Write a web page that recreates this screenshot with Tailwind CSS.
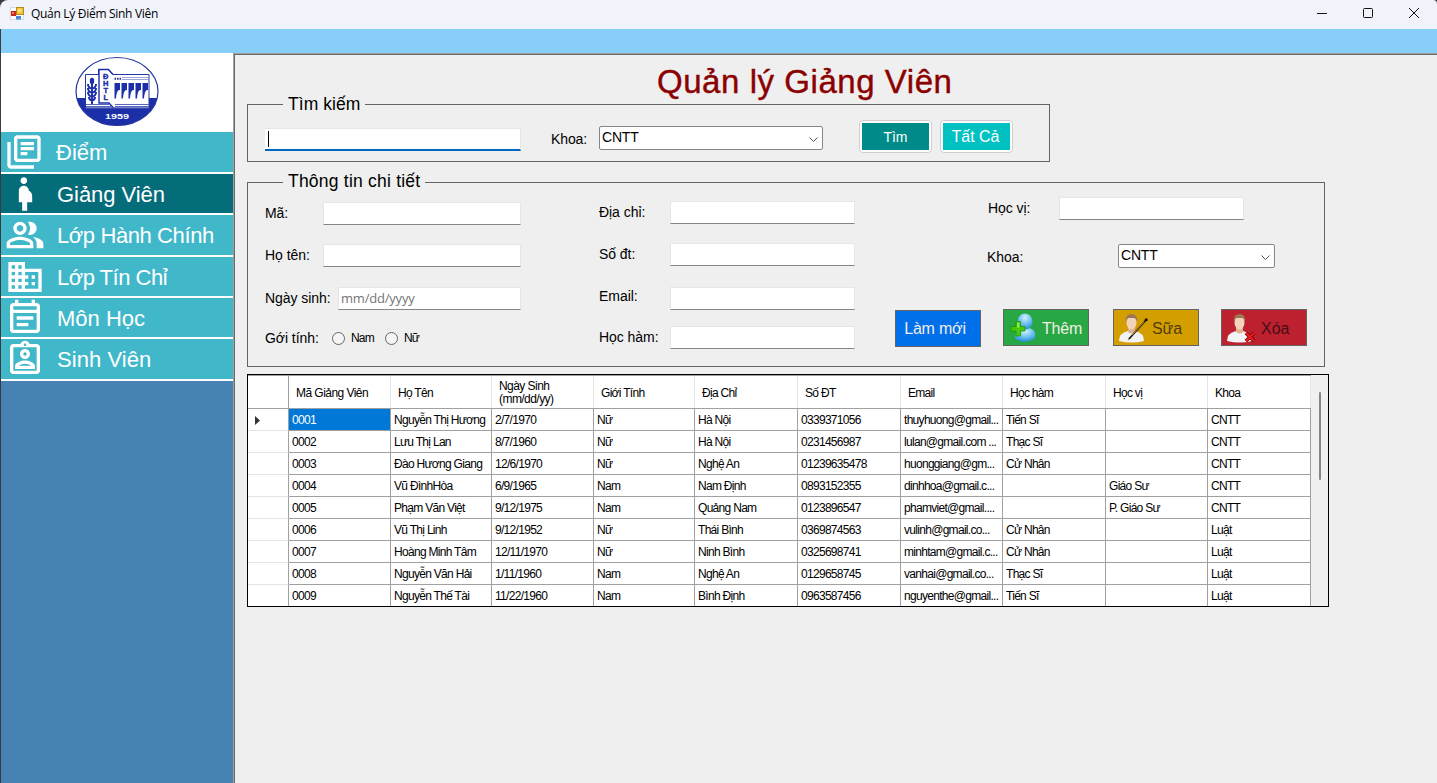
<!DOCTYPE html>
<html lang="vi">
<head>
<meta charset="utf-8">
<title>Quản Lý Điểm Sinh Viên</title>
<script src="https://cdn.jsdelivr.net/npm/@tailwindcss/browser@4"></script>
</head>
<body class="w-[1437px] h-[783px] overflow-hidden bg-[#3c3c3c] font-['Liberation_Sans',Arial,sans-serif] text-black flex flex-col">

<!-- Title bar -->
<header class="h-[29px] shrink-0 bg-[#f1f3fb] rounded-tl-lg rounded-tr-sm flex items-center pl-2.5">
  <svg class="w-3.5 h-[13px] mb-0.5" viewBox="0 0 14 13">
    <rect x=".5" y=".5" width="13" height="12" fill="#fff" stroke="#d8dbe4"/>
    <rect x="1" y="4" width="5" height="5" fill="#c8281c"/><rect x="2" y="5" width="2" height="2" fill="#ef7d60"/>
    <rect x="6.500" y=".5" width="7" height="7" fill="#f8c43a" stroke="#b58a1b"/><rect x="8" y="2" width="3" height="3" fill="#fde58e"/>
    <rect x="6" y="9" width="5" height="3.500" fill="#4f87dd"/>
  </svg>
  <span class="ml-[7px] mb-0.5 font-['Open_Sans','Noto_Sans',sans-serif] text-[12px] leading-none tracking-[-0.300px]">Quản Lý Điểm Sinh Viên</span>
  <div class="ml-auto mr-[17px] mb-1 flex gap-[34px]">
    <svg class="w-3 h-3" viewBox="0 0 12 12"><path d="M1 6.500h10" stroke="#111" fill="none"/></svg>
    <svg class="w-3 h-3" viewBox="0 0 12 12"><rect x="1.500" y="1.500" width="9" height="9" rx="1" stroke="#111" fill="none"/></svg>
    <svg class="w-3 h-3" viewBox="0 0 12 12"><path d="M1 1l10 10M11 1L1 11" stroke="#111" fill="none"/></svg>
  </div>
</header>
<div class="h-6 shrink-0 ml-px bg-[#87cefa]"></div>

<div class="flex grow min-h-0 ml-px">
  <!-- Sidebar -->
  <aside class="w-[232px] shrink-0 bg-[#4682b4]">
    <div class="h-[79px] bg-white pl-[74px] pt-[3px]">
      <svg class="w-[84px] h-[71px]" viewBox="0 0 84 71">
        <clipPath id="oval"><ellipse cx="42" cy="35.500" rx="41" ry="34"/></clipPath>
        <ellipse cx="42" cy="35.500" rx="41" ry="34" fill="#fff"/>
        <rect x="0" y="42" width="84" height="29" fill="#1a2fa8" clip-path="url(#oval)"/>
        <path d="M10.500 18.500h13v-5h10l4.500 5h36v33.500H10.500z" fill="#fff" stroke="#24389f"/>
        <path d="M24 18.500v-5h9.500l4.500 5M24 18v29h10l4.500 5" fill="none" stroke="#1a2fa8" stroke-width="1.400"/>
        <path d="M11 48.500h23M40 48.500h34M11 50.500h25M40 50.500h34M11 52h63" stroke="#5867bb"/>
        <path d="M47 21.500h27M47 23.500h27" stroke="#8791cf" stroke-width=".8"/>
        <path d="M39.500 22.700h7" stroke="#24389f" stroke-width="2" stroke-dasharray="1.600 .9"/>
        <path d="M39.500 27h5.500v7q-3.500-1-4 8.500h-1.500zM46.500 27h5.500v7q-3.500-1-4 8.500h-1.500zM53.500 27h5.500v7q-3.500-1-4 8.500h-1.500zM60.500 27h5.500v7q-3.500-1-4 8.500h-1.500zM67.500 27h5.500v7q-3.500-1-4 8.500h-1.500z" fill="#1a2fa8"/>
        <path d="M17 22v26M13 28q0 4 4 4.500q4-.5 4-4.500M13 32q0 4 4 4.500q4-.5 4-4.500M13 36q0 4 4 4.500q4-.5 4-4.500M14 41q0 3 3 3.500q3-.5 3-3.500" fill="none" stroke="#1a2fa8" stroke-width="2"/>
        <ellipse cx="17" cy="25" rx="2.200" ry="3.200" fill="#1a2fa8"/>
        <g fill="#1a2fa8" stroke="#1a2fa8" stroke-width=".4" font-family="Liberation Sans" font-weight="700" font-size="7.500">
          <text x="28" y="23">Đ</text><text x="28" y="30">H</text><text x="28.500" y="37">T</text><text x="28.500" y="44">L</text>
        </g>
        <text x="30" y="63" fill="#fff" font-family="Liberation Sans" font-weight="700" font-size="7.500" textLength="24" lengthAdjust="spacingAndGlyphs">1959</text>
        <ellipse cx="42" cy="35.500" rx="41" ry="34" fill="none" stroke="#24389f" stroke-width="1.200"/>
      </svg>
    </div>
    <nav class="text-white text-[22px] leading-none">
      <div class="h-[42px] bg-[#41b8c9] border-b-2 border-white flex items-center pl-[3px]">
        <svg class="size-10 shrink-0" viewBox="0 0 24 24" fill="currentColor"><path d="M4 6H2v14c0 1.100.9 2 2 2h14v-2H4V6zm16-4H8c-1.100 0-2 .9-2 2v12c0 1.100.9 2 2 2h12c1.100 0 2-.9 2-2V4c0-1.100-.9-2-2-2zm0 14H8V4h12v12zM10 9h8v2h-8zm0 3h4v2h-4zm0-6h8v2h-8z"/></svg>
        <span class="ml-3 pt-0.5">Điểm</span>
      </div>
      <div class="h-[41px] bg-[#056d7a] border-b-2 border-white flex items-center pl-1">
        <svg class="size-10 shrink-0" viewBox="0 0 24 24" fill="currentColor"><path d="M9 4c0-1.110.89-2 2-2s2 .89 2 2-.89 2-2 2-2-.89-2-2zm7 9c-.01-1.340-.83-2.510-2-3 0-1.660-1.340-3-3-3s-3 1.340-3 3v7h2v5h3v-5h3v-4z" transform="translate(.3 0)"/></svg>
        <span class="ml-3 pt-0.5 tracking-[-0.050px]">Giảng Viên</span>
      </div>
      <div class="h-[42px] bg-[#41b8c9] border-b-2 border-white flex items-center pl-1">
        <svg class="size-10 shrink-0" viewBox="0 0 24 24" fill="currentColor"><path d="M16.670 13.130C18.040 14.060 19 15.320 19 17v3h4v-3c0-2.180-3.570-3.470-6.330-3.870zM15 12c2.210 0 4-1.790 4-4s-1.790-4-4-4c-.47 0-.91.1-1.330.24C14.500 5.270 15 6.580 15 8s-.5 2.730-1.330 3.760c.42.14.86.24 1.330.24zM9 12c2.210 0 4-1.790 4-4s-1.790-4-4-4-4 1.790-4 4 1.790 4 4 4zm0-6c1.100 0 2 .9 2 2s-.9 2-2 2-2-.9-2-2 .9-2 2-2zm0 7c-2.670 0-8 1.340-8 4v3h16v-3c0-2.660-5.330-4-8-4zm6 5H3v-.99C3.200 16.290 6.300 15 9 15s5.800 1.290 6 2v1z"/></svg>
        <span class="ml-3 pt-0.5 tracking-[-0.400px]">Lớp Hành Chính</span>
      </div>
      <div class="h-[41px] bg-[#41b8c9] border-b-2 border-white flex items-center pl-1">
        <svg class="size-10 shrink-0" viewBox="0 0 24 24" fill="currentColor"><path d="M12 7V3H2v18h20V7H12zM6 19H4v-2h2v2zm0-4H4v-2h2v2zm0-4H4V9h2v2zm0-4H4V5h2v2zm4 12H8v-2h2v2zm0-4H8v-2h2v2zm0-4H8V9h2v2zm0-4H8V5h2v2zm10 12h-8v-2h2v-2h-2v-2h2v-2h-2V9h8v10zm-2-8h-2v2h2v-2zm0 4h-2v2h2v-2z"/></svg>
        <span class="ml-3 pt-0.5 tracking-[-0.500px]">Lớp Tín Chỉ</span>
      </div>
      <div class="h-[41px] bg-[#41b8c9] border-b-2 border-white flex items-center pl-1">
        <svg class="size-10 shrink-0" viewBox="0 0 24 24" fill="currentColor" fill-rule="evenodd"><path d="M19 3h-1V1h-2v2H8V1H6v2H5c-1.110 0-2 .9-2 2v14c0 1.100.89 2 2 2h14c1.100 0 2-.9 2-2V5c0-1.100-.9-2-2-2zM5 5h14v2H5zM5 9h14v10H5zM7 11h10v2H7zM7 15h7v2H7z"/></svg>
        <span class="ml-3 pt-0.5">Môn Học</span>
      </div>
      <div class="h-[42px] bg-[#41b8c9] border-b-2 border-white flex items-center pl-1">
        <svg class="size-10 shrink-0" viewBox="0 0 24 24" fill="currentColor" fill-rule="evenodd"><path d="M19 3h-4.180C14.400 1.840 13.300 1 12 1s-2.400.84-2.820 2H5c-1.100 0-2 .9-2 2v14c0 1.100.9 2 2 2h14c1.100 0 2-.9 2-2V5c0-1.100-.9-2-2-2zm-7-.25c.41 0 .75.34.75.75s-.34.75-.75.75-.75-.34-.75-.75.34-.75.75-.75zM19 19H5V5h14v14zM12 12c1.650 0 3-1.350 3-3s-1.350-3-3-3-3 1.350-3 3 1.350 3 3 3zm0-4c.55 0 1 .45 1 1s-.45 1-1 1-1-.45-1-1 .45-1 1-1zM6 16.470V18h12v-1.530c0-2.500-3.970-3.580-6-3.580s-6 1.070-6 3.580zm2.310-.47c.69-.56 2.380-1.120 3.690-1.120s3.010.56 3.690 1.120H8.310z"/></svg>
        <span class="ml-3 pt-0.5 tracking-[0.050px]">Sinh Viên</span>
      </div>
    </nav>
  </aside>

  <!-- Content -->
  <main class="grow min-w-0 bg-[#a0a0a0] pl-px pt-px">
  <div class="h-full bg-[#efefef] border-l border-t border-[#696969] pl-3">
    <h1 class="h-[41px] ml-[410px] pt-[9px] text-[#8b0000] text-[33px] leading-[36px] tracking-[0.550px] [-webkit-text-stroke:0.4px_#8b0000] whitespace-nowrap">Quản lý Giảng Viên</h1>

    <fieldset class="w-[803px] h-[66px] border border-[#646464] flex">
      <legend class="ml-[35px] px-[5px] h-[17px] leading-[16px] text-[17.500px] tracking-[0.050px]">Tìm kiếm</legend>
      <div class="flex items-start text-[14px] leading-none tracking-[-0.100px]">
        <div class="ml-[17px] mt-[15px] w-64 h-[23px] bg-white border-t border-r border-[#e3e6ea] border-b-2 border-b-[#0067c0] pl-[3px] pt-0.5"><div class="w-px h-4 bg-black"></div></div>
        <span class="w-12 ml-[30px] mt-[19px]">Khoa:</span>
        <div class="w-56 h-6 mt-[13px] bg-white border border-[#868686] rounded-xs flex justify-between pl-0.5 pt-[3px] pr-1">
          <span class="tracking-[-0.200px]">CNTT</span>
          <svg class="w-[9px] h-[5px] mt-[7px]" viewBox="0 0 9 5"><path d="M.5.5l4 4 4-4" fill="none" stroke="#555"/></svg>
        </div>
        <button class="ml-9 mt-[7px] w-[73px] h-[33px] rounded border border-[#cfcfcf] bg-white p-0.5"><span class="w-full h-full bg-[#008b8b] text-white flex items-center justify-center pt-px">Tìm</span></button>
        <button class="ml-2 mt-[7px] w-[73px] h-[33px] rounded border border-[#cfcfcf] bg-white p-0.5"><span class="w-full h-full bg-[#00c1c1] text-white flex items-center justify-center text-base leading-none tracking-normal pr-0.5">Tất Cả</span></button>
      </div>
    </fieldset>

    <fieldset class="mt-3 w-[1078px] h-[193px] border border-[#646464]">
      <legend class="ml-[35px] px-[5px] h-[17px] leading-[14px] text-[17.500px] tracking-[0.220px]">Thông tin chi tiết</legend>
      <div class="flex text-[14px] leading-[16px] tracking-[-0.050px]">
        <div class="ml-[17px] w-64 flex flex-col">
          <div class="mt-[11px] flex justify-between items-center h-[23px]"><span class="pb-0.5">Mã:</span><div class="w-[198px] h-[23px] bg-white border border-[#e6e6e6] border-b-[#868686]"></div></div>
          <div class="mt-[19px] flex justify-between items-center h-[23px]"><span class="pb-0.5">Họ tên:</span><div class="w-[198px] h-[23px] bg-white border border-[#e6e6e6] border-b-[#868686]"></div></div>
          <div class="mt-5 flex justify-between items-center h-[23px]"><span class="pb-0.5">Ngày sinh:</span><div class="w-[183px] h-[23px] bg-white border border-[#e6e6e6] border-b-[#868686] pl-0.5 leading-[21px] font-['Open_Sans','Noto_Sans',sans-serif] text-[13px] tracking-[-0.200px] text-[#757575]">mm/dd/yyyy</div></div>
          <div class="mt-5 flex items-center"><span class="w-[67px]">Gới tính:</span>
            <span class="size-[13px] rounded-full border border-[#666] bg-[#f5f5f5]"></span><span class="ml-1.5 w-[34px] text-[12px] tracking-[-0.800px]">Nam</span>
            <span class="size-[13px] rounded-full border border-[#666] bg-[#f5f5f5]"></span><span class="ml-1.5 text-[12px] tracking-[-0.800px]">Nữ</span></div>
        </div>
        <div class="ml-[78px] w-64 flex flex-col">
          <div class="mt-[10px] flex justify-between items-center h-[23px]"><span class="pb-0.5">Địa chỉ:</span><div class="w-[185px] h-[23px] bg-white border border-[#e6e6e6] border-b-[#868686]"></div></div>
          <div class="mt-[19px] flex justify-between items-center h-[23px]"><span class="pb-0.5">Số đt:</span><div class="w-[185px] h-[23px] bg-white border border-[#e6e6e6] border-b-[#868686]"></div></div>
          <div class="mt-[21px] flex justify-between h-[23px]"><span class="pt-px">Email:</span><div class="w-[185px] h-[23px] bg-white border border-[#e6e6e6] border-b-[#868686]"></div></div>
          <div class="mt-4 flex justify-between items-center h-[23px]"><span class="pb-px">Học hàm:</span><div class="w-[185px] h-[23px] bg-white border border-[#e6e6e6] border-b-[#868686]"></div></div>
        </div>
        <div class="ml-10 w-[412px] flex flex-col">
          <div class="mt-[6px] ml-[93px] flex h-[23px] items-center"><span class="w-[71px] pb-0.5">Học vị:</span><div class="w-[185px] h-[23px] bg-white border border-[#e6e6e6] border-b-[#868686]"></div></div>
          <div class="mt-6 ml-[92px] flex h-6 items-center"><span class="w-[131px] pt-0.5">Khoa:</span>
            <div class="w-[157px] h-6 bg-white border border-[#868686] rounded-xs flex justify-between pl-0.5 pt-0.5 pr-1"><span class="tracking-[-0.200px]">CNTT</span><svg class="w-[9px] h-[5px] mt-2" viewBox="0 0 9 5"><path d="M.5.5l4 4 4-4" fill="none" stroke="#555"/></svg></div>
          </div>
          <div class="mt-[41px] flex text-base leading-none tracking-normal">
            <button class="mt-px w-[86px] h-[37px] border border-[#646464] bg-[#0070ea] text-[#f3ecec] pr-1.5 pt-px tracking-[-0.200px]">Làm mới</button>
            <button class="ml-[22px] w-[86px] h-[37px] border border-[#646464] bg-[#28a745] text-[#f0f0e4] flex items-center pl-1.5">
              <svg class="w-[26px] h-[30px] shrink-0" viewBox="0 0 26 30">
                <defs><radialGradient id="blue" cx=".5" cy=".25" r=".8"><stop offset="0" stop-color="#d3f0ff"/><stop offset=".6" stop-color="#5db9ef"/><stop offset="1" stop-color="#2387cf"/></radialGradient></defs>
                <path d="M5 25c0-7 5-10 12-10s9 5 8 9c-2 6-18 6-20 1z" fill="url(#blue)"/>
                <ellipse cx="15" cy="8.500" rx="7.500" ry="8" fill="url(#blue)"/>
                <path d="M6 8.500h4.500v5H15v4.500h-4.500v5H6v-5H1v-4.500h5z" fill="#45c80e" stroke="#259400" stroke-width=".8"/>
                <path d="M7 9.500h2.500v5H7z" fill="#8be84d"/>
              </svg><span class="ml-1.5 pt-0.5 tracking-[-0.200px]">Thêm</span>
            </button>
            <button class="ml-6 w-[86px] h-[37px] border border-[#646464] bg-[#d39e00] text-[#513c0c] flex items-center pl-[5px]">
              <svg class="w-[29px] h-[30px] shrink-0" viewBox="0 0 29 30">
                <path d="M0 28q0-8 9-10h7q9 2 9 10-12 3-25 0z" fill="#f3f3f6"/><path d="M9 15h7v4q-3 3-7 0z" fill="#ddb391"/>
                <ellipse cx="12.500" cy="9.500" rx="5" ry="7" fill="#f2d4bb"/><path d="M7 9q-1-8 5.500-8t5.500 8q-1-4-3-4H10q-2 0-3 4z" fill="#9d7654"/>
                <path d="M9.500 26.500L27 7" stroke="#171717" stroke-width="1.800"/><path d="M13 22.200L25 8.800" stroke="#e8bb4c" stroke-width=".7"/><path d="M8.500 28l.7-2.500 1.800 1z" fill="#e8bb4c"/><circle cx="27.200" cy="6.800" r="1.500" fill="#111"/>
              </svg><span class="ml-1 pt-0.5 tracking-[-0.100px]">Sữa</span>
            </button>
            <button class="ml-[22px] w-[86px] h-[37px] border border-[#646464] bg-[#bd2130] text-[#470c16] flex items-center pl-[5px]">
              <svg class="w-[29px] h-[30px] shrink-0" viewBox="0 0 29 30">
                <path d="M0 28q0-8 9-10h7q9 2 9 10-12 3-25 0z" fill="#f3f3f6"/><path d="M9 15h7v4q-3 3-7 0z" fill="#ddb391"/>
                <ellipse cx="12.500" cy="9.500" rx="5" ry="7" fill="#f2d4bb"/><path d="M7 9q-1-8 5.500-8t5.500 8q-1-4-3-4H10q-2 0-3 4z" fill="#9d7654"/>
                <path d="M19 20l8 8M27 20l-8 8" stroke="#6e0000" stroke-width="3.600"/><path d="M19 20l8 8M27 20l-8 8" stroke="#ea1c1c" stroke-width="2.200"/>
              </svg><span class="ml-[5px] pt-0.5">Xóa</span>
            </button>
          </div>
        </div>
      </div>
    </fieldset>

    <!-- Lecturer grid -->
    <div class="mt-[7px] w-[1082px] h-[233px] border border-black flex overflow-hidden text-[12px] leading-[13px] tracking-[-0.700px]">
      <div class="w-[1063px] shrink-0 bg-white border-t border-[#a0a0a0]">
        <div class="grid grid-cols-[41px_102px_101px_102px_101px_103px_103px_102px_103px_102px_103px] h-[33px] border-b border-[#a0a0a0] *:border-r *:border-[#e5e5e5] *:first:border-[#a0a0a0] *:flex *:items-center *:pl-[7px] *:pt-0.5">
          <div></div><div class="tracking-[-0.550px]">Mã Giảng Viên</div><div>Họ Tên</div><div class="tracking-[-0.550px]">Ngày Sinh<br>(mm/dd/yy)</div><div>Giới Tính</div><div>Địa Chỉ</div><div>Số ĐT</div><div>Email</div><div>Học hàm</div><div>Học vị</div><div>Khoa</div>
        </div>
        <div id="rows"></div>
      </div>
      <div class="grow bg-[#f0f0f0] pl-2 pt-[17px]"><div class="w-0.5 h-[88px] rounded-full bg-[#858585]"></div></div>
    </div>
  </div>
  </main>
</div>

<script>
const data = [
  ["0001","Nguyễn Thị Hương","2/7/1970","Nữ","Hà Nội","0339371056","thuyhuong@gmail...","Tiến Sĩ","","CNTT"],
  ["0002","Lưu Thị Lan","8/7/1960","Nữ","Hà Nội","0231456987","lulan@gmail.com ...","Thạc Sĩ","","CNTT"],
  ["0003","Đào Hương Giang","12/6/1970","Nữ","Nghệ An","01239635478","huonggiang@gm...","Cử Nhân","","CNTT"],
  ["0004","Vũ ĐìnhHòa","6/9/1965","Nam","Nam Định","0893152355","dinhhoa@gmail.c...","","Giáo Sư","CNTT"],
  ["0005","Phạm Văn Việt","9/12/1975","Nam","Quảng Nam","0123896547","phamviet@gmail....","","P. Giáo Sư","CNTT"],
  ["0006","Vũ Thị Linh","9/12/1952","Nữ","Thái Bình","0369874563","vulinh@gmail.co...","Cử Nhân","","Luật"],
  ["0007","Hoàng Minh Tâm","12/11/1970","Nữ","Ninh Bình","0325698741","minhtam@gmail.c...","Cử Nhân","","Luật"],
  ["0008","Nguyễn Văn Hải","1/11/1960","Nam","Nghệ An","0129658745","vanhai@gmail.co...","Thạc Sĩ","","Luật"],
  ["0009","Nguyễn Thế Tài","11/22/1960","Nam","Bình Định","0963587456","nguyenthe@gmail...","Tiến Sĩ","","Luật"]
];
document.getElementById("rows").innerHTML = data.map((r, i) =>
  `<div class="grid grid-cols-[41px_102px_101px_102px_101px_103px_103px_102px_103px_102px_103px] h-[22px] whitespace-nowrap">
    <div class="border-r border-r-[#a0a0a0] border-b border-b-[#e5e5e5] flex items-center pl-[7px] pt-px">${i ? "" : '<svg class="w-[5px] h-[9px]" viewBox="0 0 5 9"><path d="M0 0l5 4.500L0 9z" fill="#333"/></svg>'}</div>` +
  r.map((c, j) => `<div class="border-r border-b border-[#a0a0a0] flex items-center pl-[3px] pt-px ${i === 0 && j === 0 ? "bg-[#0078d7] text-white" : ""}">${c}</div>`).join("") + "</div>").join("");
</script>
</body>
</html>
